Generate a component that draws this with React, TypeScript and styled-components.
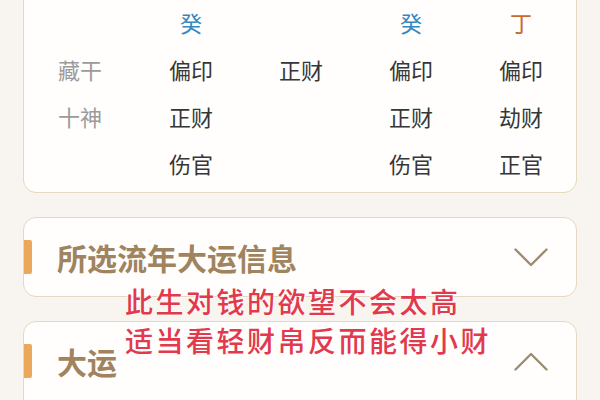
import styled, { createGlobalStyle } from "styled-components";

const GlobalStyle = createGlobalStyle`
  html, body {
    margin: 0;
    padding: 0;
    background: #f8f4ef;
    overflow: hidden;
  }
  body {
    font-family: "Noto Sans CJK SC", "Noto Sans", sans-serif;
  }
`;

type Tone = "label" | "text" | "water" | "fire";

const toneColor: Record<Tone, string> = {
  label: "#9b9b9b",
  text: "#363636",
  water: "#3387bf",
  fire: "#c76a2f",
};

const rows: { label: string; cells: { text: string; tone?: Tone }[] }[] = [
  {
    label: "",
    cells: [
      { text: "癸", tone: "water" },
      { text: "" },
      { text: "癸", tone: "water" },
      { text: "丁", tone: "fire" },
    ],
  },
  {
    label: "藏干",
    cells: [{ text: "偏印" }, { text: "正财" }, { text: "偏印" }, { text: "偏印" }],
  },
  {
    label: "十神",
    cells: [{ text: "正财" }, { text: "" }, { text: "正财" }, { text: "劫财" }],
  },
  {
    label: "",
    cells: [{ text: "伤官" }, { text: "" }, { text: "伤官" }, { text: "正官" }],
  },
];

const App: React.FC = () => {
  return (
    <>
      <GlobalStyle />
      <StyledPage>
        <StyledPillarCard>
          <StyledGrid>
            {rows.map((row, i) => (
              <StyledRow key={i}>
                <StyledCell tone="label">{row.label}</StyledCell>
                {row.cells.map((cell, j) => (
                  <StyledCell key={j} tone={cell.tone ?? "text"}>
                    {cell.text}
                  </StyledCell>
                ))}
              </StyledRow>
            ))}
          </StyledGrid>
        </StyledPillarCard>

        <StyledSection>
          <StyledHeader>
            <StyledMark />
            <StyledTitle>所选流年大运信息</StyledTitle>
            <Chevron up={false} />
          </StyledHeader>
        </StyledSection>

        <StyledSection tall>
          <StyledHeader>
            <StyledMark />
            <StyledTitle>大运</StyledTitle>
            <Chevron up />
          </StyledHeader>
        </StyledSection>
      </StyledPage>

      <StyledCaption>
        <span>此生对钱的欲望不会太高</span>
        <span>适当看轻财帛反而能得小财</span>
      </StyledCaption>
    </>
  );
};

const Chevron: React.FC<{ up: boolean }> = ({ up }) => (
  <StyledChevron width="34" height="19" viewBox="0 0 34 19">
    <polyline
      points={up ? "1.5,17.5 17,2 32.5,17.5" : "1.5,1.5 17,17 32.5,1.5"}
      fill="none"
      stroke="#9d8c74"
      strokeWidth="2.4"
      strokeLinecap="round"
      strokeLinejoin="round"
    />
  </StyledChevron>
);

const StyledPage = styled.div`
  position: relative;
  padding: 0 23px;
  display: flex;
  flex-direction: column;
  gap: 24px;
`;

const StyledPillarCard = styled.div`
  margin-top: -2px;
  background: #fffefd;
  border: 1px solid #e6d7c0;
  border-radius: 0 0 13px 13px;
  padding-bottom: 5px;
`;

const StyledGrid = styled.div`
  display: flex;
  flex-direction: column;
`;

const StyledRow = styled.div`
  display: grid;
  grid-template-columns: 112px repeat(4, 110px);
  height: 47px;
  align-items: center;
`;

const StyledCell = styled.div<{ tone: Tone }>`
  text-align: center;
  font-size: 22px;
  line-height: 47px;
  color: ${({ tone }) => toneColor[tone]};
`;

const StyledSection = styled.div<{ tall?: boolean }>`
  background: #fffefd;
  border: 1px solid #e6d7c0;
  border-radius: 13px;
  box-sizing: border-box;
  height: ${({ tall }) => (tall ? "260px" : "80px")};
`;

const StyledHeader = styled.div`
  height: 78px;
  display: flex;
  align-items: center;
  padding-right: 28px;
`;

const StyledMark = styled.div`
  width: 8px;
  height: 34px;
  background: #eba85b;
  border-radius: 0 2px 2px 0;
`;

const StyledTitle = styled.div`
  flex: 1;
  margin-left: 25px;
  font-size: 30px;
  font-weight: 700;
  color: #a0845f;
  line-height: 1;
`;

const StyledChevron = styled.svg`
  display: block;
`;

const StyledCaption = styled.div`
  position: absolute;
  top: 282px;
  left: 125px;
  display: flex;
  flex-direction: column;
  font-size: 28px;
  font-weight: 500;
  letter-spacing: 2.5px;
  line-height: 39px;
  color: #e2394c;
  white-space: nowrap;
  text-shadow: 0 0 2px #fff, 0 0 2px #fff, 0 0 3px #fff;
`;

export default App;
